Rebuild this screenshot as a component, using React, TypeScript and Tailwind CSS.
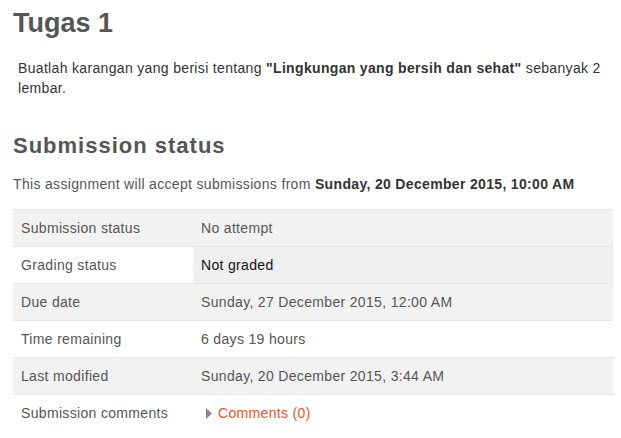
import React from "react";

type Row = { label: string; value: React.ReactNode; striped: boolean; dark?: boolean };

const rows: Row[] = [
  { label: "Submission status", value: "No attempt", striped: true },
  { label: "Grading status", value: "Not graded", striped: false, dark: true },
  { label: "Due date", value: "Sunday, 27 December 2015, 12:00 AM", striped: true },
  { label: "Time remaining", value: "6 days 19 hours", striped: false },
  { label: "Last modified", value: "Sunday, 20 December 2015, 3:44 AM", striped: true },
  {
    label: "Submission comments",
    value: (
      <span className="flex items-center">
        <svg width="6" height="11" viewBox="0 0 6 11" className="ml-[5px] mr-[6px]">
          <path d="M0 0 L6 5.5 L0 11 Z" fill="#888" />
        </svg>
        <a className="text-[#f4511e] cursor-pointer">Comments (0)</a>
      </span>
    ),
    striped: false,
  },
];

const App = () => {
  return (
    <div className="w-[621px] h-[438px] overflow-hidden bg-white px-[13px] pt-[3px] font-['Liberation_Sans',Arial,sans-serif] text-[14px] leading-[20px] tracking-[0.33px] text-[#555]">
      <h2 className="text-[27px] leading-[40px] font-bold tracking-normal text-[#555]">Tugas 1</h2>

      <div className="mt-[15px] ml-[5px] text-[#333]">
        Buatlah karangan yang berisi tentang <b>"Lingkungan yang bersih dan sehat"</b> sebanyak 2 lembar.
      </div>

      <h3 className="mt-[33px] text-[22px] leading-[30px] font-bold tracking-[1px] text-[#555]">Submission status</h3>

      <div className="mt-[13px] text-[#555]">
        This assignment will accept submissions from <b className="text-[#333]">Sunday, 20 December 2015, 10:00 AM</b>
      </div>

      <div className="mt-[15px] w-[600px]">
        {rows.map((row) => (
          <div
            key={row.label}
            className={`flex border-t border-[#e6e6e6] ${row.striped ? "bg-[#f2f2f2]" : "bg-white"}`}
          >
            <div className="w-[180px] shrink-0 px-[8px] py-[8px]">{row.label}</div>
            <div
              className={`flex-1 px-[8px] py-[8px] ${row.dark ? "bg-[#efefef] text-[#111]" : ""}`}
            >
              {row.value}
            </div>
          </div>
        ))}
      </div>
    </div>
  );
};

export default App;
